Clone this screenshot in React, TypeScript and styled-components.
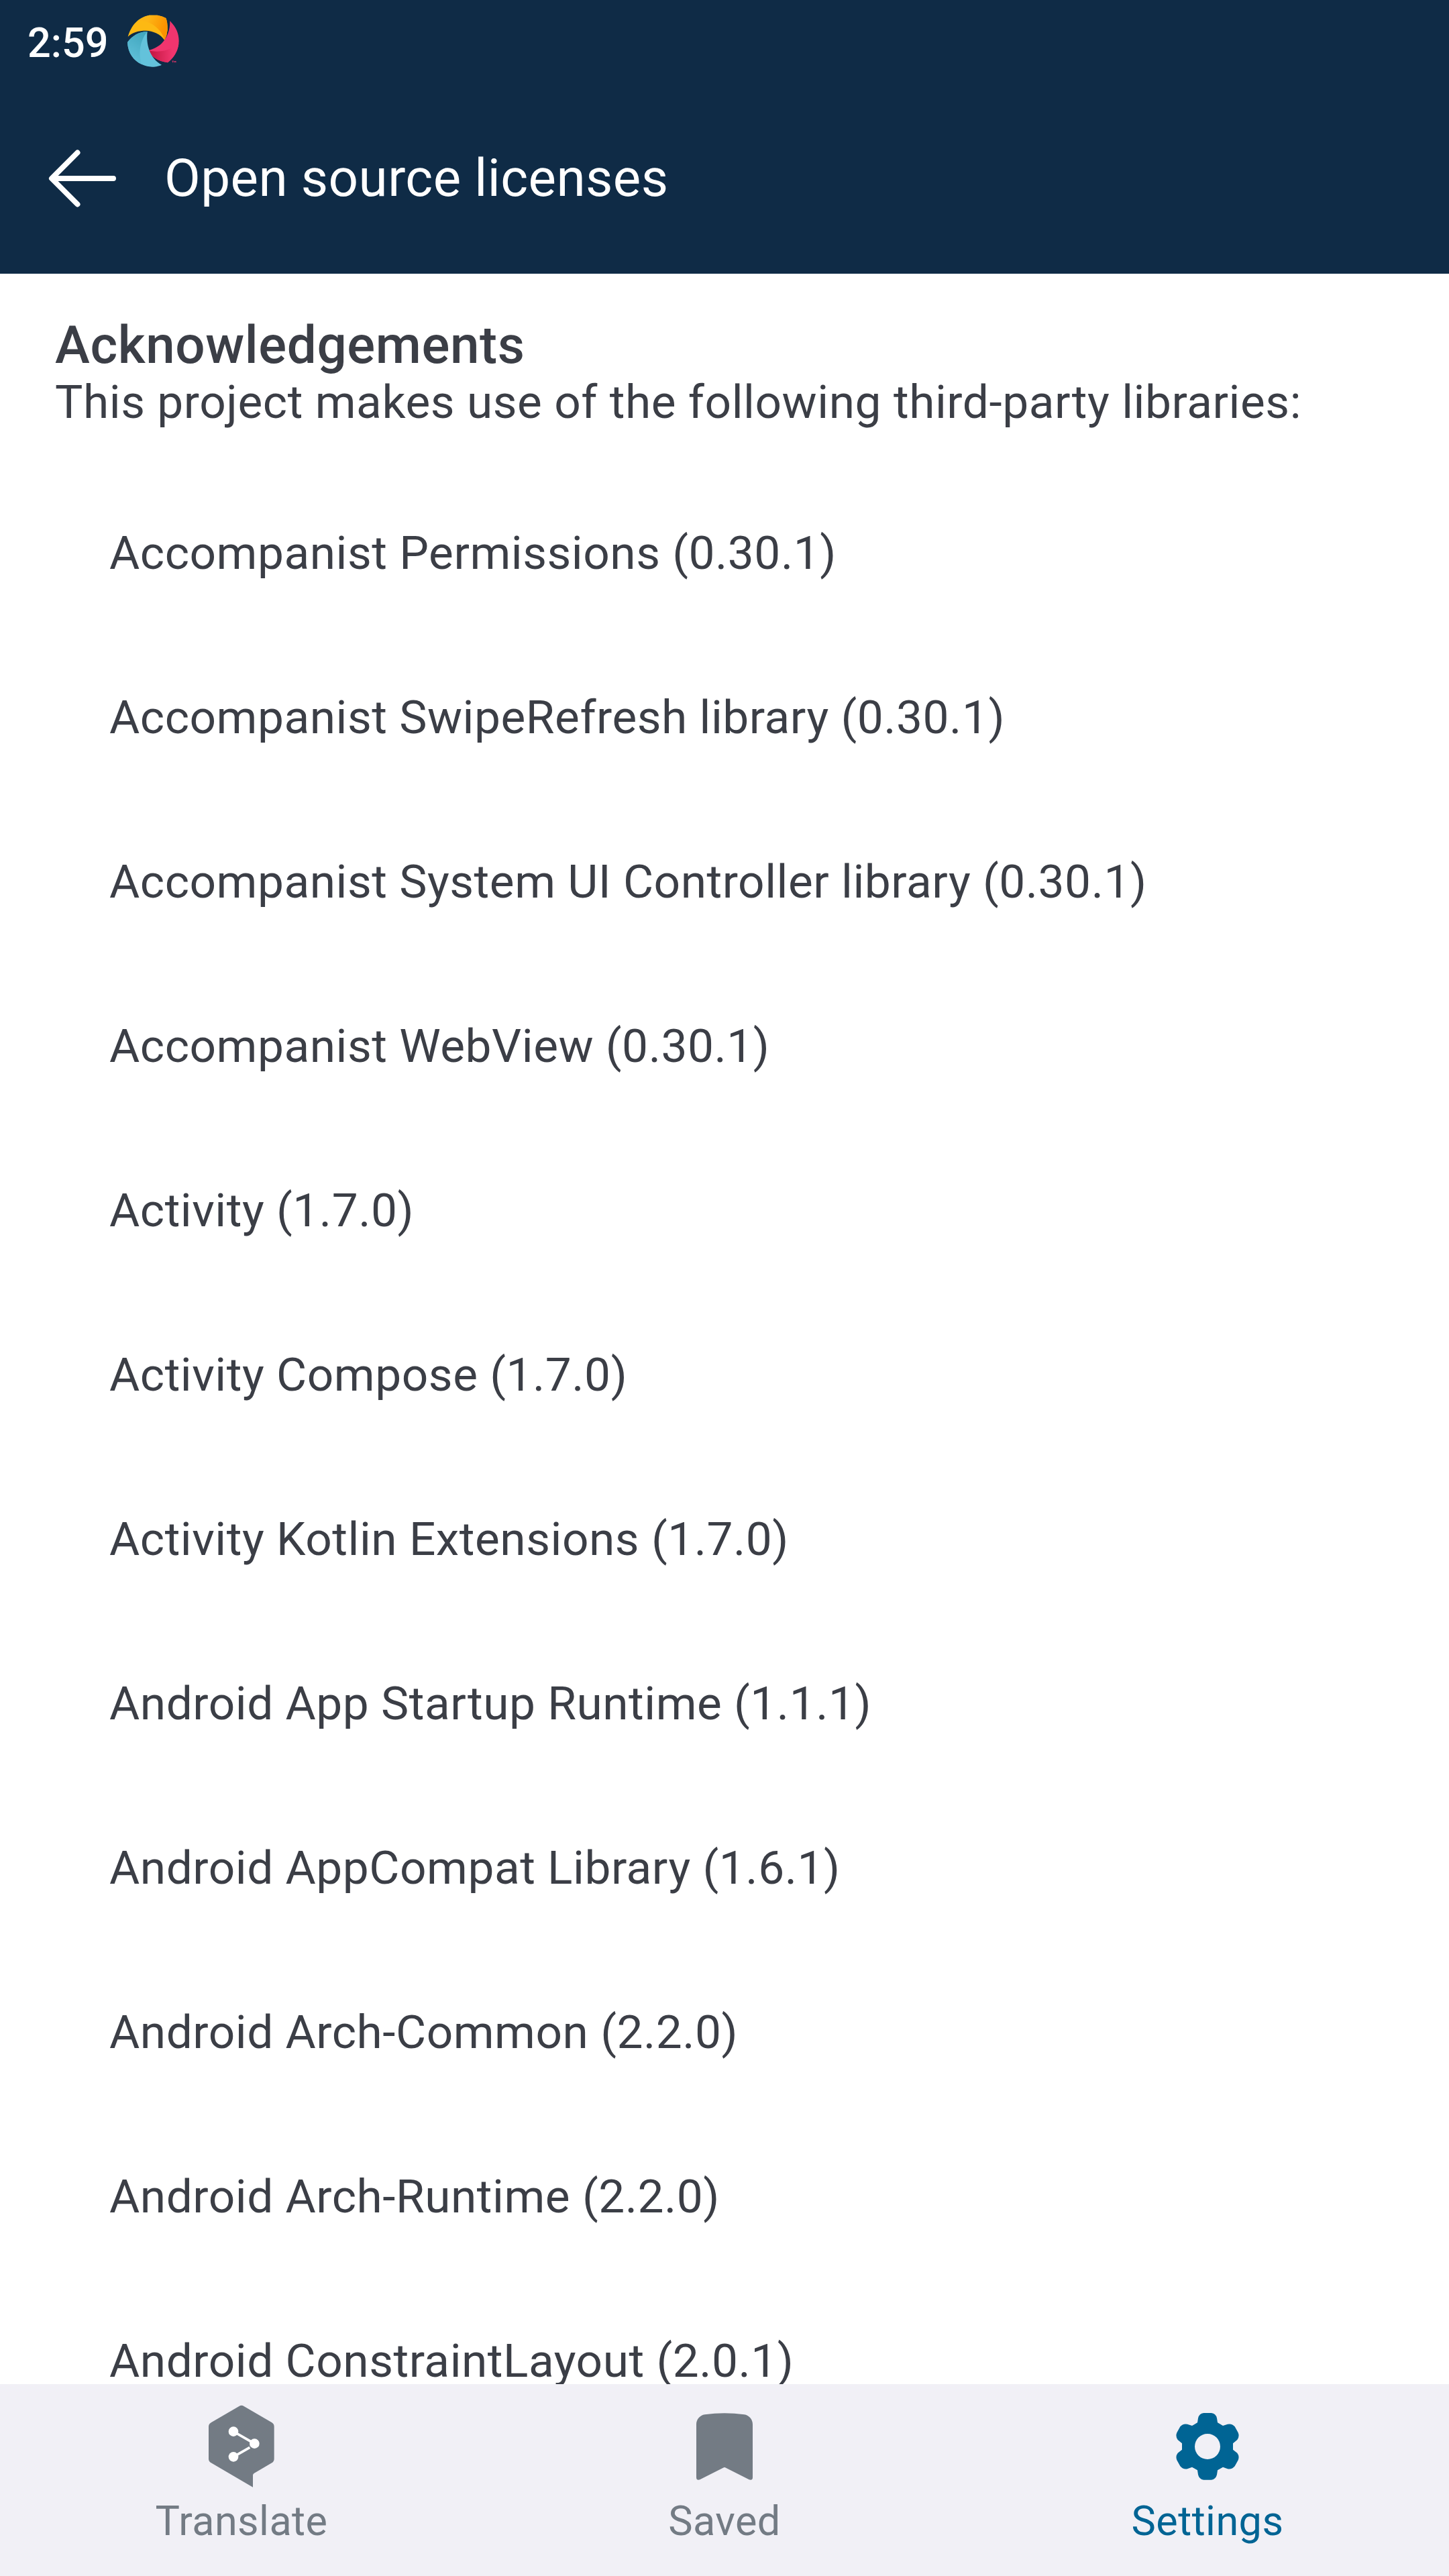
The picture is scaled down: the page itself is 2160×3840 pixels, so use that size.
import React from "react";
import styled, { createGlobalStyle } from "styled-components";

const GlobalStyle = createGlobalStyle`
  body {
    margin: 0;
    background: #ffffff;
  }
`;

const Screen = styled.div`
  display: flex;
  flex-direction: column;
  width: 2160px;
  height: 3840px;
  overflow: hidden;
  background: #ffffff;
  color: #3b3e46;
  font-family: Roboto, "Noto Sans", sans-serif;
`;

const Header = styled.header`
  flex: none;
  height: 408px;
  background: #0f2b46;
  color: #ffffff;
`;

const StatusBar = styled.div`
  display: flex;
  align-items: center;
  gap: 26.4px;
  box-sizing: border-box;
  height: 125px;
  padding: 3px 0 0 41px;
`;

const Clock = styled.span`
  font-size: 61.2px;
  font-weight: 500;
  line-height: 72px;
`;

const StatusLogo = styled.svg`
  width: 80px;
  height: 80px;
  margin-top: -6px;
`;

const AppBar = styled.div`
  display: flex;
  align-items: center;
  height: 282px;
  padding-left: 69px;
`;

const BackArrow = styled.svg`
  width: 108px;
  height: 108px;
  margin-right: 68px;
`;

const Title = styled.h1`
  margin: 0;
  padding-bottom: 2px;
  font-size: 78.2px;
  font-weight: 400;
  line-height: 92px;
  letter-spacing: 0.42px;
`;

const Content = styled.main`
  flex: 1;
  min-height: 0;
  overflow: hidden;
  padding: 60px 82px 0;
`;

const Heading = styled.h2`
  margin: 0;
  font-size: 78.2px;
  font-weight: 500;
  line-height: 92px;
  letter-spacing: 0.58px;
`;

const Intro = styled.p`
  margin: 0;
  font-size: 69.4px;
  line-height: 80px;
  letter-spacing: 0.55px;
  white-space: nowrap;
`;

const LibraryList = styled.ul`
  margin: 62px 0 0;
  padding: 0 0 0 81px;
  list-style: none;
`;

const LibraryRow = styled.li`
  height: 245px;
  font-size: 69.4px;
  line-height: 245px;
  letter-spacing: 0.52px;
  white-space: nowrap;
`;

const NavBar = styled.nav`
  flex: none;
  display: grid;
  grid-template-columns: repeat(3, 1fr);
  height: 286px;
  background: #f1f0f6;
`;

const NavItem = styled.div<{ $active?: boolean }>`
  display: flex;
  flex-direction: column;
  align-items: center;
  gap: 7px;
  padding-top: 25px;
  color: ${(p) => (p.$active ? "#006494" : "#737b84")};
`;

const NavIcon = styled.svg`
  width: 136px;
  height: 136px;
  fill: currentColor;
`;

const NavLabel = styled.span`
  font-size: 61.2px;
  line-height: 72px;
  letter-spacing: 0.42px;
`;

const libraries = [
  "Accompanist Permissions (0.30.1)",
  "Accompanist SwipeRefresh library (0.30.1)",
  "Accompanist System UI Controller library (0.30.1)",
  "Accompanist WebView (0.30.1)",
  "Activity (1.7.0)",
  "Activity Compose (1.7.0)",
  "Activity Kotlin Extensions (1.7.0)",
  "Android App Startup Runtime (1.1.1)",
  "Android AppCompat Library (1.6.1)",
  "Android Arch-Common (2.2.0)",
  "Android Arch-Runtime (2.2.0)",
  "Android ConstraintLayout (2.0.1)",
];

const SwirlLogo = () => (
  <StatusLogo viewBox="22 34 240 240">
    <defs>
      <linearGradient id="amber" x1="0.35" y1="0" x2="1" y2="0.2">
        <stop offset="0" stopColor="#fdb515" />
        <stop offset="1" stopColor="#fb9200" />
      </linearGradient>
      <linearGradient id="crimson" x1="0" y1="0.2" x2="1" y2="0.2">
        <stop offset="0" stopColor="#bf143c" />
        <stop offset="0.8" stopColor="#f0356e" />
      </linearGradient>
      <linearGradient id="teal" x1="0.8" y1="0" x2="0.4" y2="1">
        <stop offset="0" stopColor="#3fa5bd" />
        <stop offset="1" stopColor="#62c1da" />
      </linearGradient>
    </defs>
    <path fill="#fdb913" d="M30 135C45 85 75 48 125 39H162Q185 43 200 52Q208 70 207 105Q205 130 194 151C178 124 140 108 110 108C80 108 50 115 30 135Z" />
    <path fill="url(#amber)" d="M82 63Q100 45 125 39H162Q185 43 200 52Q208 70 207 105Q205 130 194 151C180 98 130 64 82 63Z" />
    <path fill="#f0356e" d="M218 65C245 90 258 120 258 154C257 190 240 225 208 251C165 245 135 225 119 196C170 187 219 145 218 65Z" />
    <path fill="url(#crimson)" d="M119 196C170 208 220 198 257 166C254 198 238 227 208 251C165 245 135 225 119 196Z" />
    <path fill="#63c2db" d="M28 160C50 130 80 113 117 112C110 170 128 232 181 261C165 269 148 270 138 270C78 267 32 225 28 160Z" />
    <path fill="url(#teal)" d="M28 160C50 130 80 113 117 112C85 150 75 210 92 259C55 242 30 210 28 160Z" />
    <path fill="none" stroke="#f0356e" strokeWidth="2.5" d="M227 244H235M231 244V251M238 251V244L241 248L244 244V251" />
  </StatusLogo>
);

const TranslateIcon = () => (
  <NavIcon viewBox="276 117 408 408">
    <path d="M469 141Q480 134 491 141L616 214Q626 220 626 232V376Q626 388 616 394L537 440Q531 443 531 449V503L344 394Q333 388 333 376V232Q333 220 344 214Z" />
    <g fill="#ffffff" stroke="#ffffff">
      <path fill="none" strokeWidth="11" d="M444 254L538 308M444 367L517 325" />
      <g stroke="none">
        <circle cx="444" cy="254" r="22" />
        <circle cx="538" cy="308" r="22" />
        <circle cx="444" cy="367" r="22" />
      </g>
    </g>
  </NavIcon>
);

const BookmarkIcon = () => (
  <NavIcon viewBox="156 117 408 408">
    <path d="M272 178Q360 165 448 178C470 181 486 200 486 222V459Q486 474 470 469L366 416Q360 412 354 416L250 469Q234 474 234 459V222C234 200 250 181 272 178Z" />
  </NavIcon>
);

const GearIcon = () => (
  <NavIcon viewBox="276 117 408 408">
    <path
      fillRule="evenodd"
      d="M463 171H497Q517 173 522 194L525 214L549 228L570 221Q590 217 602 232L617 259Q624 277 613 291L594 307V335L613 350Q624 364 617 382L602 409Q590 424 570 421L549 413L525 427L522 447Q517 468 497 470H463Q443 468 438 447L435 427L411 413L390 421Q370 424 358 409L343 382Q336 364 347 350L366 335V307L347 291Q336 277 343 259L358 232Q370 217 390 221L411 228L435 214L438 194Q443 173 463 171ZM480 264A57 57 0 1 0 480 378A57 57 0 1 0 480 264Z"
    />
  </NavIcon>
);

export default function App() {
  return (
    <Screen>
      <GlobalStyle />
      <Header>
        <StatusBar>
          <Clock>2:59</Clock>
          <SwirlLogo />
        </StatusBar>
        <AppBar>
          <BackArrow
            viewBox="69 212 108 108"
            fill="none"
            stroke="#ffffff"
            strokeWidth="8"
            strokeLinecap="round"
            strokeLinejoin="round"
          >
            <path d="M169 266H78M115.5 227.5L77 266L115.5 304.5" />
          </BackArrow>
          <Title>Open source licenses</Title>
        </AppBar>
      </Header>
      <Content>
        <Heading>Acknowledgements</Heading>
        <Intro>This project makes use of the following third-party libraries:</Intro>
        <LibraryList>
          {libraries.map((name) => (
            <LibraryRow key={name}>{name}</LibraryRow>
          ))}
        </LibraryList>
      </Content>
      <NavBar>
        <NavItem>
          <TranslateIcon />
          <NavLabel>Translate</NavLabel>
        </NavItem>
        <NavItem>
          <BookmarkIcon />
          <NavLabel>Saved</NavLabel>
        </NavItem>
        <NavItem $active>
          <GearIcon />
          <NavLabel>Settings</NavLabel>
        </NavItem>
      </NavBar>
    </Screen>
  );
}
